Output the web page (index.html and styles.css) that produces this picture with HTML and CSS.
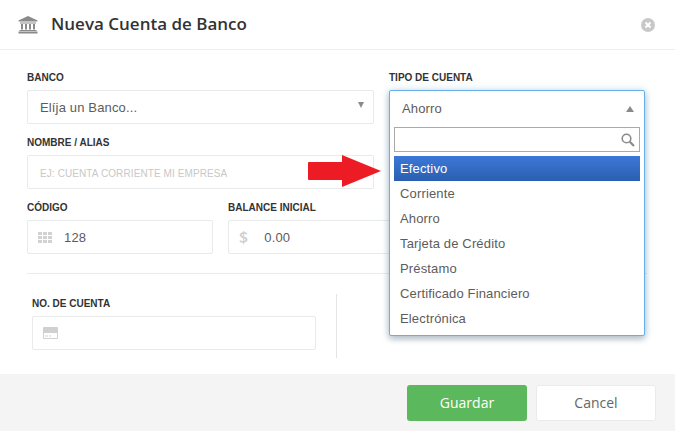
FILE: index.html
```html
<!DOCTYPE html>
<html lang="es">
<head>
    <meta charset="UTF-8">
    <title>Nueva Cuenta de Banco</title>
    <link rel="stylesheet" href="styles.css">
</head>
<body>
    <!-- Modal header -->
    <header class="modal-header">
        <svg class="bank-icon" viewBox="0 0 20 18" width="20" height="18">
            <path d="M10 0 L19.500 4.500 V5.500 H0.500 V4.500 Z" fill="#8a8a8a"/>
            <path d="M2 6.500 H18 V7.500 H2 Z M1.500 14 H18.500 V15 H1.500 Z M0.500 15.500 H19.500 V17.500 H0.500 Z" fill="#8a8a8a"/>
            <path d="M3 8 H5 V13.500 H3 Z M7 8 H9 V13.500 H7 Z M11 8 H13 V13.500 H11 Z M15 8 H17 V13.500 H15 Z" fill="#8a8a8a"/>
        </svg>
        <h1>Nueva Cuenta de Banco</h1>
        <svg class="close-icon" viewBox="0 0 14 14" width="14" height="14">
            <circle cx="7" cy="7" r="7" fill="#c8c8c8"/>
            <path d="M4.500 4.500 L9.500 9.500 M9.500 4.500 L4.500 9.500" stroke="#fff" stroke-width="2"/>
        </svg>
    </header>

    <!-- Form -->
    <main class="modal-body">
        <div class="row-top">
            <div class="left-col">
                <div class="field">
                    <label>Banco</label>
                    <div class="box select-box">
                        <span>Elíja un Banco...</span>
                        <i class="caret-down"></i>
                    </div>
                </div>
                <div class="field">
                    <label>Nombre / Alias</label>
                    <div class="box placeholder">EJ: CUENTA CORRIENTE MI EMPRESA</div>
                </div>
            </div>
            <div class="right-col">
                <label>Tipo de Cuenta</label>
            </div>
        </div>

        <div class="row-amounts">
            <div class="field">
                <label>Código</label>
                <div class="box icon-box">
                    <svg class="grid-icon" viewBox="0 0 14 11" width="14" height="11">
                        <path d="M0 0 H4 V3 H0 Z M5 0 H9 V3 H5 Z M10 0 H14 V3 H10 Z M0 4 H4 V7 H0 Z M5 4 H9 V7 H5 Z M10 4 H14 V7 H10 Z M0 8 H4 V11 H0 Z M5 8 H9 V11 H5 Z M10 8 H14 V11 H10 Z" fill="#d2d2d2"/>
                    </svg>
                    <span>128</span>
                </div>
            </div>
            <div class="field">
                <label>Balance Inicial</label>
                <div class="box icon-box">
                    <span class="dollar">$</span>
                    <span>0.00</span>
                </div>
            </div>
        </div>

        <hr class="divider">

        <div class="row-account">
            <div class="field account-field">
                <label>No. de Cuenta</label>
                <div class="box icon-box">
                    <svg class="card-icon" viewBox="0 0 15 12" width="15" height="12">
                        <path d="M0 1 Q0 0 1 0 H14 Q15 0 15 1 V11 Q15 12 14 12 H1 Q0 12 0 11 Z M1 6 V11 H14 V6 Z" fill="#d0d0d0" fill-rule="evenodd"/>
                        <path d="M2 8.500 H5 V9.500 H2 Z M6 8.500 H8 V9.500 H6 Z" fill="#d0d0d0"/>
                    </svg>
                </div>
            </div>
            <div class="vline"></div>
        </div>
    </main>

    <!-- Footer buttons -->
    <footer class="modal-footer">
        <button class="btn btn-save">Guardar</button>
        <button class="btn btn-cancel">Cancel</button>
    </footer>

    <!-- Open dropdown, lies over the form -->
    <div class="dropdown">
        <div class="dropdown-head">
            <span>Ahorro</span>
            <i class="caret-up"></i>
        </div>
        <div class="dropdown-search">
            <svg viewBox="0 0 14 14" width="14" height="14">
                <circle cx="5.500" cy="5.500" r="4.300" fill="none" stroke="#8a8a8a" stroke-width="1.600"/>
                <path d="M8.800 8.800 L13 13" stroke="#8a8a8a" stroke-width="2.200"/>
            </svg>
        </div>
        <ul class="options">
            <li class="active">Efectivo</li>
            <li>Corriente</li>
            <li>Ahorro</li>
            <li>Tarjeta de Crédito</li>
            <li>Préstamo</li>
            <li>Certificado Financiero</li>
            <li>Electrónica</li>
        </ul>
    </div>

    <!-- Red arrow annotation -->
    <svg class="arrow" viewBox="0 0 73 32" width="73" height="32">
        <path d="M1 7 H34 V0 L73 16 L34 32 V25 H1 Q0 25 0 24 V8 Q0 7 1 7 Z" fill="#ed1c24"/>
    </svg>
</body>
</html>
```

FILE: styles.css
```css
/* Page */
* {
    box-sizing: border-box;
}

body {
    margin: 0;
    width: 675px;
    height: 431px;
    overflow: hidden;
    display: flex;
    flex-direction: column;
    background: white;
    font-family: 'Liberation Sans', Arial, sans-serif;
    font-size: 13px;
    letter-spacing: 0.15px;
    color: #5c5c5c;
}

/* Header */
.modal-header {
    height: 50px;
    flex: none;
    display: flex;
    align-items: center;
    padding: 0 20px 0 18px;
    border-bottom: 1px solid #eeeeee;
}

.modal-header h1 {
    flex: 1;
    margin: 0 0 2px 13px;
    font-family: 'Open Sans', sans-serif;
    font-size: 17px;
    font-weight: 600;
    letter-spacing: 0;
    color: #333;
}

/* Form */
.modal-body {
    flex: 1;
    padding: 20px 30px 0 27px;
}

label {
    display: block;
    height: 14px;
    margin-bottom: 6px;
    font-size: 10px;
    line-height: 16px;
    font-weight: bold;
    text-transform: uppercase;
    letter-spacing: 0;
    color: #333;
}

.box {
    height: 34px;
    display: flex;
    align-items: center;
    background: white;
    border: 1px solid #e8eaeb;
    border-radius: 2px;
    padding: 0 12px;
}

.row-top {
    display: flex;
    gap: 15px;
}

.left-col {
    width: 347px;
    display: flex;
    flex-direction: column;
    gap: 11px;
}

.right-col {
    flex: 1;
}

.select-box {
    justify-content: space-between;
    padding-right: 9px;
}

.caret-down {
    width: 0;
    height: 0;
    margin-bottom: 4px;
    border-left: 3.500px solid transparent;
    border-right: 3.500px solid transparent;
    border-top: 6px solid #8a8a8a;
}

.placeholder {
    padding-top: 2px;
    font-size: 10px;
    letter-spacing: 0.1px;
    color: #c8c8c8;
}

.row-amounts {
    display: grid;
    grid-template-columns: 186px 1fr;
    gap: 15px;
    margin-top: 11px;
}

.icon-box {
    gap: 12px;
    padding-left: 10px;
}

.grid-icon {
    flex: none;
}

.dollar {
    font-family: 'Open Sans', sans-serif;
    font-size: 16px;
    font-weight: 600;
    color: #cfcfcf;
}

.icon-box .dollar + span {
    margin-left: 4px;
}

.divider {
    margin: 19px -2px 0 0;
    border: 0;
    border-top: 1px solid #ebebeb;
}

.row-account {
    display: flex;
    margin: 20px 0 0 5px;
}

.account-field {
    width: 284px;
    padding-top: 2px;
}

.vline {
    width: 1px;
    height: 64px;
    margin-left: 20px;
    background: #e4e4e4;
}

/* Footer */
.modal-footer {
    height: 57px;
    flex: none;
    display: flex;
    justify-content: flex-end;
    gap: 9px;
    padding: 11px 19px 0 0;
    background: #f4f4f4;
}

.btn {
    width: 120px;
    height: 36px;
    padding: 0 0 2px;
    border-radius: 3px;
    font-family: 'Open Sans', sans-serif;
    font-size: 14px;
}

.btn-save {
    background: #5cb85c;
    color: white;
    border: none;
}

.btn-cancel {
    background: white;
    color: #666;
    border: 1px solid #ebebeb;
}

/* Open dropdown */
.dropdown {
    position: absolute;
    left: 389px;
    top: 90px;
    width: 256px;
    height: 246px;
    background: white;
    border: 1px solid #66afe9;
    border-radius: 2px;
    box-shadow: 0 0 8px rgba(102, 175, 233, 0.3), 0 3px 6px rgba(0, 0, 0, 0.25);
}

.dropdown-head {
    height: 35px;
    display: flex;
    align-items: center;
    justify-content: space-between;
    padding: 0 10px 0 12px;
}

.caret-up {
    width: 0;
    height: 0;
    border-left: 4px solid transparent;
    border-right: 4px solid transparent;
    border-bottom: 6px solid #8a8a8a;
}

.dropdown-search {
    height: 25px;
    margin: 1px 4px 0;
    display: flex;
    align-items: center;
    justify-content: flex-end;
    padding-right: 4px;
    border: 1px solid #aaaaaa;
}

.options {
    list-style: none;
    margin: 4px 4px 0;
    padding: 0;
}

.options li {
    height: 25px;
    line-height: 25px;
    padding-left: 6px;
}

.options .active {
    color: white;
    background: linear-gradient(#3d78d8, #2a5fb0);
}

/* Annotation */
.arrow {
    position: absolute;
    left: 308px;
    top: 155px;
}
```
